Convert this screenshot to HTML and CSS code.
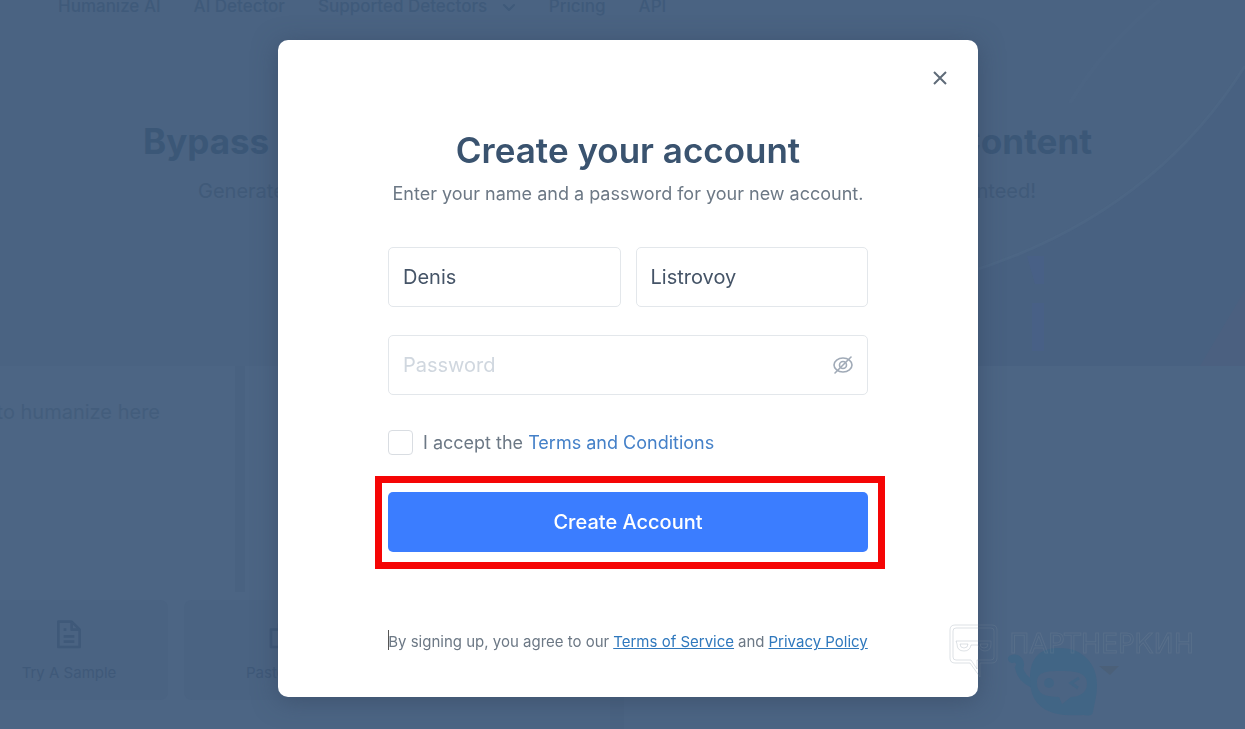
FILE: index.html
```
<!DOCTYPE html>
<html lang="en">
<head>
  <meta charset="UTF-8">
  <title>Create your account</title>
  <meta name="viewport" content="width=device-width, initial-scale=1.0">
  <link rel="stylesheet" href="styles.css">
</head>
<body>
  <div class="page">
    <section class="hero">
      <svg class="hero-art" viewBox="0 0 285 366" aria-hidden="true">
        <path d="M0 275 Q190 218 285 66 V366 H0Z" fill="#466080" opacity="0.4"/>
        <path d="M0 275 Q190 218 285 66" fill="none" stroke="#506a88" stroke-width="3" opacity="0.5"/>
        <path d="M110 103 Q145 45 200 0" fill="none" stroke="#506988" stroke-width="4" opacity="0.2"/>
        <path d="M67 256h17v28h-9zM72 303h12v48h-12z" fill="#4a5f8a" opacity="0.6"/>
        <path d="M285 290v76h-45z" fill="#50607f" opacity="0.4"/>
      </svg>
      <nav class="nav">
        <a href="#">Humanize AI</a>
        <a href="#">AI Detector</a>
        <a href="#">Supported Detectors
          <svg width="14" height="10" viewBox="0 0 14 10" fill="none" stroke="currentColor" stroke-width="2" stroke-linecap="round" stroke-linejoin="round"><path d="M2 3l5 5 5-5"/></svg>
        </a>
        <a href="#">Pricing</a>
        <a href="#">API</a>
      </nav>
      <h1 class="hero-title"><span>Bypass AI</span> <span>Content</span></h1>
      <p class="hero-text"><span>Generate text</span> <span>guaranteed!</span></p>
    </section>

    <section class="editor">
      <div class="panel">
        <div class="input-area">
          <textarea aria-label="Text to humanize" placeholder="to humanize here"></textarea>
          <div class="track"></div>
        </div>
        <div class="tiles">
          <button class="tile" type="button">
            <svg width="32" height="32" viewBox="0 0 24 24" fill="none" stroke="currentColor" stroke-width="2" stroke-linejoin="round"><path d="M4 2h10l6 6v13H4z"/><path d="M14 2v6h6M8 8h2M8 13h8M8 17h8"/></svg>
            Try A Sample
          </button>
          <button class="tile" type="button">
            <svg width="32" height="32" viewBox="0 0 24 24" fill="none" stroke="currentColor" stroke-width="2" stroke-linejoin="round"><path d="M3 8h18v13H3zM9 4h6v4H9z"/></svg>
            Paste Text
          </button>
        </div>
      </div>
      <div class="panel"></div>
    </section>
  </div>

  <svg class="chat-bot" viewBox="0 0 100 80" role="img" aria-label="Chat">
    <path d="M6 20c6-2 10 4 7 9 2 9 7 13 14 16" fill="none" stroke="#416585" stroke-width="8" stroke-linecap="round"/>
    <path d="M24 40C24 16 36 9 54 9c23 0 37 16 37 37 0 10-2 16-4 27-1 4-4 4-9 3C48 78 24 72 24 40z" fill="#416585"/>
    <path d="M31 44c0-11 8-12 25-12s25 3 25 13-10 13-16 13l-9 7-3-7c-14 0-22-3-22-14z" fill="#4b6483"/>
    <circle cx="43" cy="44" r="5" fill="#426484"/>
    <path d="M73 39l-8 5 7 5" fill="none" stroke="#426484" stroke-width="3"/>
    <path d="M93 27h20l-9 9z" fill="#4b6079"/>
  </svg>

  <div class="overlay">
    <main class="modal" role="dialog" aria-labelledby="modalTitle">
      <button class="close" type="button" aria-label="Close">
        <svg width="14" height="14" viewBox="0 0 14 14" fill="none" stroke="currentColor" stroke-width="2"><path d="M1 1l12 12M13 1L1 13"/></svg>
      </button>

      <h2 id="modalTitle">Create your account</h2>
      <p class="subtitle">Enter your name and a password for your new account.</p>

      <form>
        <div class="names">
          <input type="text" aria-label="First name" value="Denis">
          <input type="text" aria-label="Last name" value="Listrovoy">
        </div>
        <div class="password">
          <input type="password" aria-label="Password" placeholder="Password">
          <button class="toggle" type="button" aria-label="Show password">
            <svg width="20" height="20" viewBox="0 0 20 20" fill="none" stroke="currentColor" stroke-width="1.6" stroke-linecap="round"><ellipse cx="10" cy="10" rx="9" ry="7"/><circle cx="10" cy="10" r="3.5"/><path d="M2 18L18 2"/></svg>
          </button>
        </div>
        <div class="accept">
          <input type="checkbox" id="accept">
          <label for="accept">I accept the <a href="#">Terms and Conditions</a></label>
        </div>
        <div class="highlight">
          <button class="submit" type="submit">Create Account</button>
        </div>
      </form>

      <p class="legal"><span class="caret"></span>By signing up, you agree to our <a href="#">Terms of Service</a> and <a href="#">Privacy Policy</a></p>
    </main>
  </div>

  <div class="watermark">
    <svg width="50" height="54" viewBox="0 0 50 54" fill="none" stroke="currentColor">
      <path d="M6 1h37q5 0 5 5v28q0 5-5 5h-12v14L21 39H6q-5 0-5-5V6q0-5 5-5z"/>
      <path d="M7 4h35q3 0 3 3v26q0 3-3 3H28v9l-6-9H7q-3 0-3-3V7q0-3 3-3z"/>
      <path d="M7 17h35v3q0 7-6 7-5 0-7-6h-7q-1 6-7 6-7 0-7-7z"/>
      <path d="M11 20h8q0 4-4 4t-4-4zM31 20h8q0 4-4 4t-4-4z"/>
    </svg>
    <span>ПАРТНЕРКИН</span>
  </div>
</body>
</html>
```
FILE: styles.css
```
* {
  box-sizing: border-box;
}

body {
  margin: 0;
  font-family: Inter, sans-serif;
  background: #4a6382;
  color: #3b5777;
  overflow: hidden;
}

h1,
h2,
p {
  margin: 0;
}

button {
  font-family: inherit;
  border: none;
  background: none;
  padding: 0;
  cursor: pointer;
}

/* page behind the modal */
.page {
  height: 100vh;
  display: flex;
  flex-direction: column;
  overflow: hidden;
}

.hero {
  position: relative;
  height: 366px;
  flex-shrink: 0;
  background: #4a6382;
}

.hero-art {
  position: absolute;
  top: 0;
  right: 0;
  height: 100%;
}

.nav {
  display: flex;
  gap: 33px;
  padding-left: 58px;
  font-size: 17px;
  font-weight: 500;
  line-height: 12px;
}

.nav a {
  color: #3f5a7a;
  text-decoration: none;
}

.nav svg {
  margin-left: 10px;
}

.hero-title,
.hero-text {
  display: flex;
  justify-content: space-between;
}

.hero-title {
  margin-top: 105px;
  padding: 0 153px 0 143px;
  font-size: 35px;
  line-height: 48px;
}

.hero-text {
  margin-top: 14px;
  padding: 0 209px 0 198px;
  font-size: 20px;
  line-height: 24px;
  color: #405a79;
}

.editor {
  flex: 1;
  display: grid;
  grid-template-columns: 1fr 1fr;
  gap: 14px;
  margin: 0 -35px 0 -46px;
}

.panel {
  background: #4c6584;
  padding: 0 16px;
  overflow: hidden;
}

.input-area {
  display: flex;
  width: 275px;
  height: 226px;
}

.input-area textarea {
  flex: 1;
  min-width: 0;
  padding: 34px 75px 0 0;
  border: none;
  background: none;
  resize: none;
  overflow: hidden;
  white-space: nowrap;
  font-family: inherit;
  font-size: 20px;
  line-height: 24px;
  text-align: right;
}

.input-area textarea::placeholder {
  color: #435d7c;
}

.track {
  width: 10px;
  background: #496281;
}

.tiles {
  display: flex;
  gap: 16px;
  margin-top: 8px;
}

.tile {
  flex: 0 0 198px;
  height: 100px;
  display: flex;
  flex-direction: column;
  align-items: center;
  justify-content: center;
  gap: 12px;
  border-radius: 8px;
  background: #4a6382;
  color: #3f5979;
  font-size: 15px;
}

.chat-bot {
  position: fixed;
  right: 136px;
  bottom: 10px;
  width: 106px;
  height: 80px;
  overflow: visible;
}

/* modal */
.overlay {
  position: fixed;
  inset: 0;
  display: flex;
  justify-content: center;
  align-items: flex-start;
  padding: 40px 0 0 11px;
}

.modal {
  position: relative;
  width: 100%;
  max-width: 700px;
  padding: 88px 110px 43px;
  background: #fff;
  border-radius: 10px;
  box-shadow: 0 4px 24px rgba(50, 65, 90, 0.5);
  color: #6c7885;
}

.close {
  position: absolute;
  top: 26px;
  right: 26px;
  width: 24px;
  height: 24px;
  display: flex;
  align-items: center;
  justify-content: center;
  color: #5f6b78;
}

.modal h2 {
  font-size: 35px;
  font-weight: 600;
  line-height: 44px;
  text-align: center;
  color: #3a536f;
}

.subtitle {
  margin-top: 10px;
  font-size: 18px;
  line-height: 24px;
  text-align: center;
}

form {
  margin-top: 41px;
}

.names {
  display: grid;
  grid-template-columns: 1fr 1fr;
  gap: 15px;
}

.names input,
.password {
  width: 100%;
  height: 60px;
  border: 1px solid #e3e7eb;
  border-radius: 5px;
}

.names input,
.password input {
  padding: 0 14px;
  background: #fff;
  font-family: inherit;
  font-size: 20px;
  color: #455467;
}

.password {
  display: flex;
  align-items: center;
  margin-top: 28px;
  padding-right: 14px;
}

.password input {
  flex: 1;
  min-width: 0;
  border: none;
  outline: none;
}

.password input::placeholder {
  color: #d0d7df;
}

.toggle {
  height: 20px;
  color: #a0aab7;
}

.toggle svg {
  display: block;
}

.accept {
  display: flex;
  align-items: center;
  gap: 10px;
  margin-top: 35px;
  font-size: 18px;
  line-height: 25px;
}

.accept input {
  appearance: none;
  width: 25px;
  height: 25px;
  margin: 0;
  border: 1px solid #d9dde2;
  border-radius: 4px;
}

.accept a {
  color: #4480c8;
  text-decoration: none;
}

.highlight {
  margin: 21px -17px 0 -13px;
  padding: 9px 10px 10px 6px;
  border: 7px solid #f50505;
}

.submit {
  display: block;
  width: 100%;
  height: 60px;
  border-radius: 5px;
  background: #3b7dff;
  color: #fff;
  font-size: 20px;
  font-weight: 500;
}

.legal {
  display: flex;
  justify-content: center;
  gap: 4px;
  margin-top: 61px;
  font-size: 15px;
  line-height: 24px;
  white-space: nowrap;
}

.legal a {
  color: #2f78bd;
}

.caret {
  width: 1px;
  height: 20px;
  margin-right: -5px;
  background: #555;
}

.watermark {
  position: fixed;
  right: 51px;
  bottom: 51px;
  display: flex;
  align-items: flex-start;
  gap: 10px;
  color: rgba(125, 138, 155, 0.25);
  pointer-events: none;
}

.watermark span {
  font-family: "DejaVu Sans", sans-serif;
  font-size: 27px;
  line-height: 40px;
  color: transparent;
  -webkit-text-stroke: 1px rgba(125, 138, 155, 0.25);
}
```
